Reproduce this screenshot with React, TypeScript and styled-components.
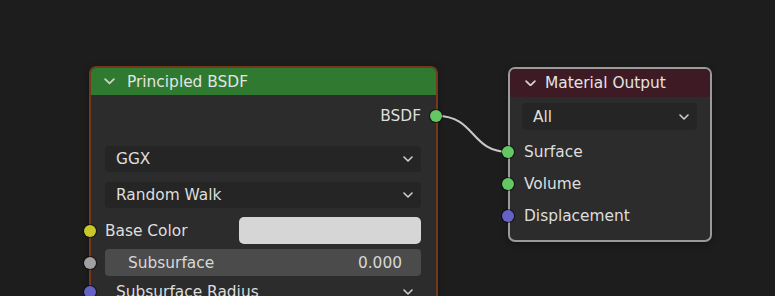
import styled, { createGlobalStyle } from 'styled-components';

const GlobalStyle = createGlobalStyle`
    html, body {
        margin: 0;
        padding: 0;
        background: #1d1d1d;
    }
    body {
        font-family: "DejaVu Sans", "Liberation Sans", sans-serif;
        -webkit-font-smoothing: antialiased;
    }
`;

const Canvas = styled.div`
    position: relative;
    width: 775px;
    height: 296px;
    overflow: hidden;
    background: #1d1d1d;
`;

// nodes sit at their place on the node editor canvas
const Node = styled.div<{ $left: number; $top: number; $width: number; $height?: number; $border: string; $bw: number }>`
    position: absolute;
    left: ${p => p.$left}px;
    top: ${p => p.$top}px;
    width: ${p => p.$width}px;
    height: ${p => (p.$height ? `${p.$height}px` : 'auto')};
    box-sizing: border-box;
    border: ${p => p.$bw}px solid ${p => p.$border};
    border-radius: 7px;
    background: #2c2c2c;
    display: flex;
    flex-direction: column;
    box-shadow: 0 2px 6px rgba(0, 0, 0, 0.35);
`;

const Header = styled.div<{ $bg: string; $h: number; $pad: number; $gap: number }>`
    height: ${p => p.$h}px;
    background: ${p => p.$bg};
    border-radius: 5px 5px 0 0;
    display: flex;
    align-items: center;
    gap: ${p => p.$gap}px;
    padding-left: ${p => p.$pad}px;
    color: #e4e4e4;
    font-size: 15.4px;
    flex-shrink: 0;
`;

const Body = styled.div<{ $padX: number; $padR: number }>`
    display: flex;
    flex-direction: column;
    padding: 0 ${p => p.$padR}px 0 ${p => p.$padX}px;
`;

const Row = styled.div<{ $h: number; $mt: number; $align?: string }>`
    position: relative;
    height: ${p => p.$h}px;
    margin-top: ${p => p.$mt}px;
    display: flex;
    align-items: center;
    justify-content: ${p => p.$align || 'flex-start'};
    color: #dedede;
    font-size: 15.4px;
    flex-shrink: 0;
`;

const Socket = styled.span<{ $color: string; $side: 'left' | 'right'; $off: number }>`
    position: absolute;
    ${p => p.$side}: ${p => p.$off}px;
    top: 50%;
    width: 12px;
    height: 12px;
    margin-top: -6px;
    border-radius: 50%;
    background: ${p => p.$color};
    box-shadow: 0 0 0 1px rgba(0, 0, 0, 0.55);
    z-index: 2;
`;

const Dropdown = styled.div<{ $h: number; $plain?: boolean }>`
    flex: 1;
    height: ${p => p.$h}px;
    background: ${p => (p.$plain ? 'transparent' : '#252525')};
    border-radius: 4px;
    display: flex;
    align-items: center;
    justify-content: space-between;
    padding: 0 8px 0 11px;
    box-sizing: border-box;
    color: #dedede;
    font-size: 15.4px;
`;

const ColorField = styled.div`
    width: 182px;
    height: 27px;
    margin-left: auto;
    background: #d6d6d6;
    border-radius: 5px;
`;

const Slider = styled.div`
    flex: 1;
    height: 27px;
    background: #4b4b4b;
    border-radius: 4px;
    display: flex;
    align-items: center;
    justify-content: space-between;
    padding: 0 19px 0 23px;
    box-sizing: border-box;
    color: #d8d8d8;
    font-size: 15.4px;
`;

const Label = styled.span<{ $indent?: number }>`
    padding-left: ${p => p.$indent || 0}px;
    white-space: nowrap;
`;

const Wire = styled.svg`
    position: absolute;
    left: 0;
    top: 0;
    z-index: 1;
    pointer-events: none;
`;

const Chevron = ({ size = 10, color = '#cfcfcf' }: { size?: number; color?: string }) => (
    <svg width={size} height={size * 0.6} viewBox="0 0 10 6">
        <polyline points="1,1 5,5 9,1" fill="none" stroke={color} strokeWidth="1.6" strokeLinecap="round" strokeLinejoin="round" />
    </svg>
);

const GREEN = '#63c763';
const PURPLE = '#6363c7';
const YELLOW = '#c7c729';
const GREY = '#a1a1a1';

export default function App() {
    return (
        <>
            <GlobalStyle />
            <Canvas>
                <Wire width={775} height={296}>
                    <path d="M437,116 C476,116 470,152 509,152" fill="none" stroke="#c9c9c9" strokeWidth="2" />
                </Wire>

                <Node $left={89} $top={66} $width={349} $height={262} $border="#74391b" $bw={2}>
                    <Header $bg="#2f7a30" $h={27} $pad={13} $gap={12}>
                        <Chevron size={11} />
                        <span>Principled BSDF</span>
                    </Header>
                    <Body $padX={14} $padR={15}>
                        <Row $h={22} $mt={10} $align="flex-end">
                            <Label>BSDF</Label>
                            <Socket $color={GREEN} $side="right" $off={-21} />
                        </Row>
                        <Row $h={26} $mt={19}>
                            <Dropdown $h={26}>
                                <span>GGX</span>
                                <Chevron />
                            </Dropdown>
                        </Row>
                        <Row $h={26} $mt={10}>
                            <Dropdown $h={26}>
                                <span>Random Walk</span>
                                <Chevron />
                            </Dropdown>
                        </Row>
                        <Row $h={27} $mt={9}>
                            <Socket $color={YELLOW} $side="left" $off={-21} />
                            <Label>Base Color</Label>
                            <ColorField />
                        </Row>
                        <Row $h={27} $mt={5}>
                            <Socket $color={GREY} $side="left" $off={-21} />
                            <Slider>
                                <span>Subsurface</span>
                                <span>0.000</span>
                            </Slider>
                        </Row>
                        <Row $h={26} $mt={3}>
                            <Socket $color={PURPLE} $side="left" $off={-21} />
                            <Dropdown $h={26} $plain>
                                <span>Subsurface Radius</span>
                                <Chevron />
                            </Dropdown>
                        </Row>
                    </Body>
                </Node>

                <Node $left={508} $top={67} $width={204} $height={175} $border="#9a9a9a" $bw={2}>
                    <Header $bg="#3e1a24" $h={28} $pad={15} $gap={9}>
                        <Chevron size={11} />
                        <span>Material Output</span>
                    </Header>
                    <Body $padX={12} $padR={13}>
                        <Row $h={27} $mt={6}>
                            <Dropdown $h={27}>
                                <span>All</span>
                                <Chevron />
                            </Dropdown>
                        </Row>
                        <Row $h={32} $mt={6}>
                            <Socket $color={GREEN} $side="left" $off={-20} />
                            <Label $indent={2}>Surface</Label>
                        </Row>
                        <Row $h={32} $mt={0}>
                            <Socket $color={GREEN} $side="left" $off={-20} />
                            <Label $indent={2}>Volume</Label>
                        </Row>
                        <Row $h={32} $mt={0}>
                            <Socket $color={PURPLE} $side="left" $off={-20} />
                            <Label $indent={2}>Displacement</Label>
                        </Row>
                    </Body>
                </Node>
            </Canvas>
        </>
    );
}
